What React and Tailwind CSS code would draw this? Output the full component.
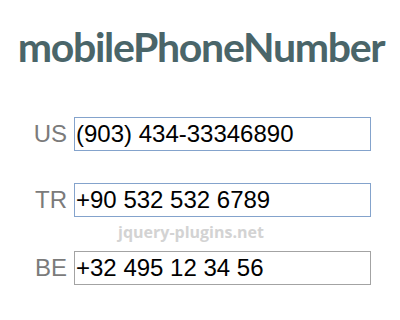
const rows = [
  { code: 'US', value: '(903) 434-33346890', focus: true },
  { code: 'TR', value: '+90 532 532 6789', focus: true },
  { code: 'BE', value: '+32 495 12 34 56', focus: false },
]

function PhoneRow({ code, value, focus }) {
  return (
    <div className="flex items-center h-[34px]">
      <label className="w-[74px] pr-[7px] text-right text-[24px] text-[#7b7b7b] font-['Liberation_Sans',Arial,sans-serif]">
        {code}
      </label>
      <input
        readOnly
        value={value}
        className={
          'w-[297px] h-[34px] px-[1px] text-[24px] text-black bg-white outline-none font-[\'Liberation_Sans\',Arial,sans-serif] border ' +
          (focus ? 'border-[#84a3cc]' : 'border-[#a3a3a3]')
        }
      />
    </div>
  )
}

export default function App() {
  return (
    <div className="w-[400px] h-[320px] bg-white overflow-hidden">
      <h1 className="pt-[22px] pl-[2px] text-center text-[41px] leading-[50px] font-bold tracking-[-1.3px] text-[#4a6569] font-['Lato','Noto_Sans',sans-serif]">
        mobilePhoneNumber
      </h1>
      <div className="mt-[45px] flex flex-col">
        <PhoneRow {...rows[0]} />
        <div className="h-[32px]" />
        <PhoneRow {...rows[1]} />
        <div className="h-[34px] flex justify-center pr-[18px] pt-[5px]">
          <span className="text-[16px] leading-[20px] font-bold text-[#d3d3d3] font-['Open_Sans',sans-serif]">
            jquery-plugins.net
          </span>
        </div>
        <PhoneRow {...rows[2]} />
      </div>
    </div>
  )
}
